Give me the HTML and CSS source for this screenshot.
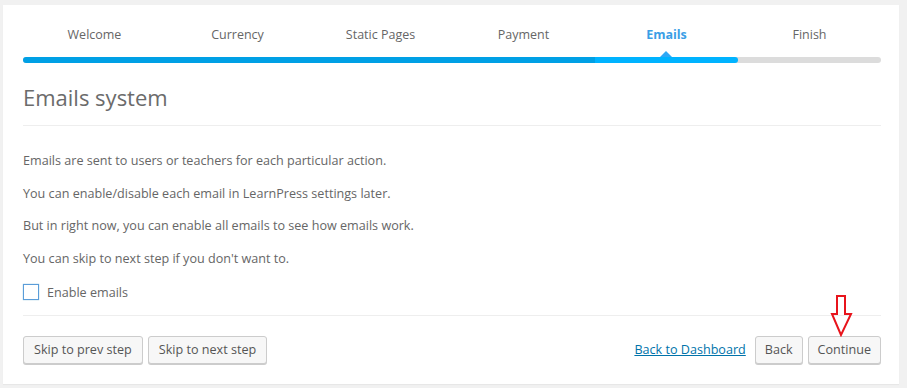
FILE: index.html
```html
<!DOCTYPE html>
<html>
<head>
<meta charset="utf-8">
<link rel="stylesheet" href="styles.css">
</head>
<body>
<div class="card">
  <div class="steps">
    <div class="step">Welcome</div>
    <div class="step">Currency</div>
    <div class="step">Static Pages</div>
    <div class="step">Payment</div>
    <div class="step active">Emails</div>
    <div class="step">Finish</div>
  </div>
  <div class="bar">
    <div class="bar-done"></div>
    <div class="bar-current"></div>
    <div class="bar-rest"></div>
  </div>
  <h1 class="title">Emails system</h1>
  <div class="body">
    <p>Emails are sent to users or teachers for each particular action.</p>
    <p>You can enable/disable each email in LearnPress settings later.</p>
    <p>But in right now, you can enable all emails to see how emails work.</p>
    <p>You can skip to next step if you don't want to.</p>
    <label class="check"><span class="box"></span>Enable emails</label>
  </div>
  <div class="footer">
    <div class="left">
      <button class="btn">Skip to prev step</button>
      <button class="btn">Skip to next step</button>
    </div>
    <div class="right">
      <a class="link" href="#">Back to Dashboard</a>
      <button class="btn btn-narrow">Back</button>
      <button class="btn btn-narrow continue">Continue
        <svg class="arrow" width="24" height="42" viewBox="0 0 24 42">
          <path d="M7 1 H15 V19 H21 L11 40 L2 19 H7 Z" fill="none" stroke="#e8141c" stroke-width="2" stroke-linejoin="miter"/>
        </svg>
      </button>
    </div>
  </div>
</div>
</body>
</html>
```
FILE: styles.css
```css
html, body {
  margin: 0;
  padding: 0;
}
body {
  background: #f1f1f1;
  padding: 5px 8px 4px 3px;
  font-family: "Open Sans", "Noto Sans", sans-serif;
  font-size: 12.6px;
  color: #555;
}
.card {
  background: #fff;
  height: 379px;
  box-sizing: border-box;
  padding: 20px 18px 0 20px;
  box-shadow: 0 1px 1px rgba(0,0,0,.04);
}
.steps {
  display: flex;
  height: 20px;
  line-height: 20px;
}
.step {
  flex: 1;
  text-align: center;
  color: #666;
  font-size: 12.5px;
}
.step.active {
  color: #3a9ee6;
  font-weight: 700;
}
.bar {
  margin-top: 12px;
  display: flex;
  height: 6px;
  border-radius: 3px;
  background: #dcdcdc;
}
.bar-done {
  width: 572px;
  background: #00a0e5;
  border-radius: 3px 0 0 3px;
}
.bar-current {
  width: 143px;
  background: #00b3ff;
  border-radius: 0 3px 3px 0;
  position: relative;
}
.bar-current::before {
  content: "";
  position: absolute;
  left: 65px;
  top: -6px;
  border-left: 6px solid transparent;
  border-right: 6px solid transparent;
  border-bottom: 6px solid #2fa8f5;
}
.bar-rest { flex: 1; }
.title {
  margin: 19px 0 0;
  padding-bottom: 13px;
  border-bottom: 1px solid #eee;
  font-size: 22px;
  line-height: 30px;
  font-weight: 400;
  color: #6b6b6b;
}
.body {
  padding: 25px 0 14px;
  border-bottom: 1px solid #eee;
}
.body p {
  margin: 0 0 13px;
  line-height: 19.7px;
  color: #666;
}
.check {
  display: flex;
  align-items: center;
  color: #666;
  margin-top: 15px;
}
.box {
  width: 14px;
  height: 14px;
  border: 1px solid #5b9dd9;
  box-shadow: 0 0 1px rgba(30,140,190,.6);
  margin-right: 8px;
}
.footer {
  display: flex;
  justify-content: space-between;
  align-items: center;
  padding-top: 20px;
}
.left, .right {
  display: flex;
  align-items: center;
  gap: 5px;
}
.btn {
  height: 28px;
  padding: 0 10px;
  font-family: inherit;
  font-size: 12.6px;
  color: #555;
  background: #f7f7f7;
  border: 1px solid #ccc;
  border-radius: 3px;
  box-shadow: 0 1px 0 #ccc;
  margin: 0;
}
.btn-narrow {
  padding: 0 9px;
}
.link {
  color: #0073aa;
  text-decoration: underline;
  margin-right: 4px;
  font-size: 12.6px;
}
.continue {
  position: relative;
}
.arrow {
  position: absolute;
  left: 21px;
  top: -42px;
}
```
